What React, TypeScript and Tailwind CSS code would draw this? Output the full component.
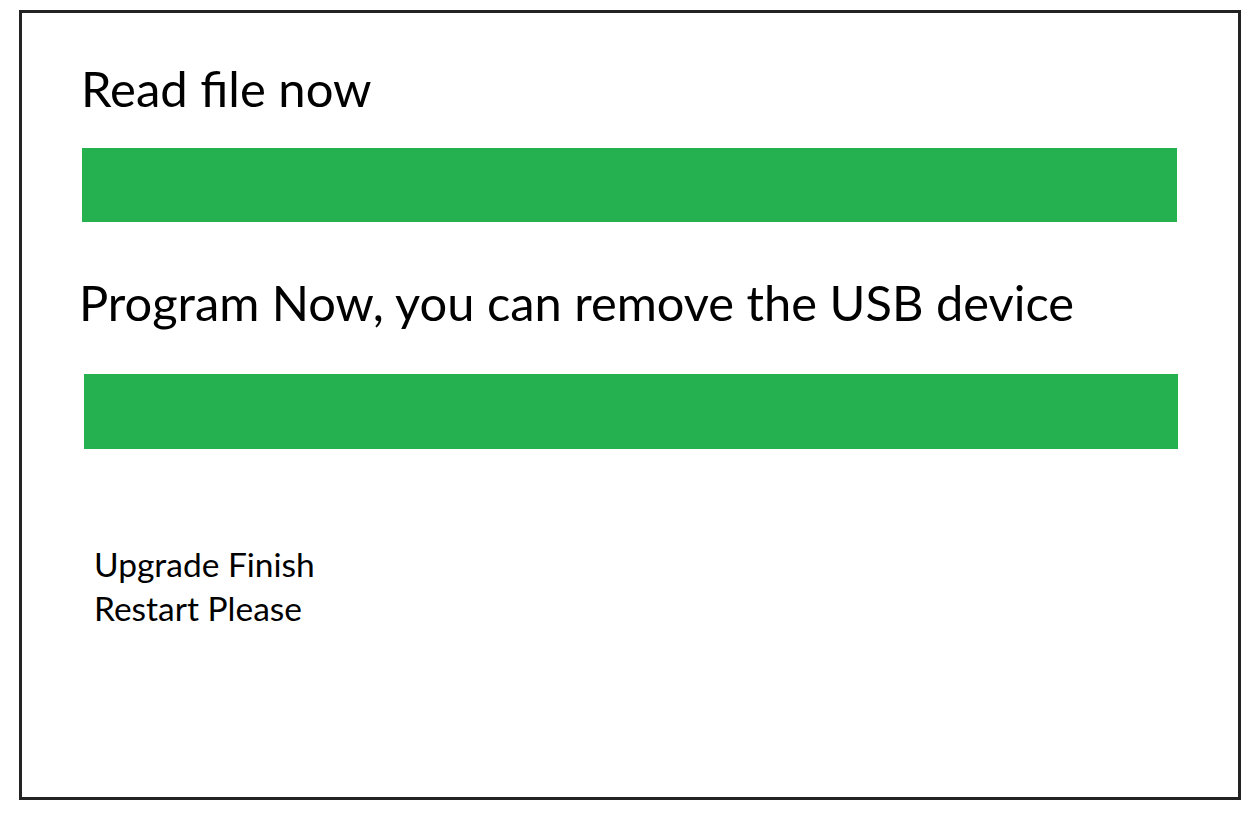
export default function App() {
  return (
    <div className="w-[1260px] h-[817px] bg-white overflow-hidden pt-[10px] pl-[19px]" style={{ fontFamily: "Lato, 'Open Sans', sans-serif" }}>
      <div className="w-[1222px] h-[790px] border-[3px] border-[#232323] flex flex-col pl-[60px] text-black">
        <div className="mt-[51px] ml-[-1px] text-[49px] leading-[49px]">Read file now</div>
        <div className="mt-[35px] w-[1095px] h-[74px] bg-[#25b14f]" />
        <div className="mt-[56px] ml-[-3px] text-[48.8px] leading-[49px]">Program Now, you can remove the USB device</div>
        <div className="mt-[47px] ml-[2px] w-[1094px] h-[75px] bg-[#25b14f]" />
        <div className="mt-[93px] ml-[12px] text-[33.5px] leading-[44px]">
          <div>Upgrade Finish</div>
          <div>Restart Please</div>
        </div>
      </div>
    </div>
  );
}
